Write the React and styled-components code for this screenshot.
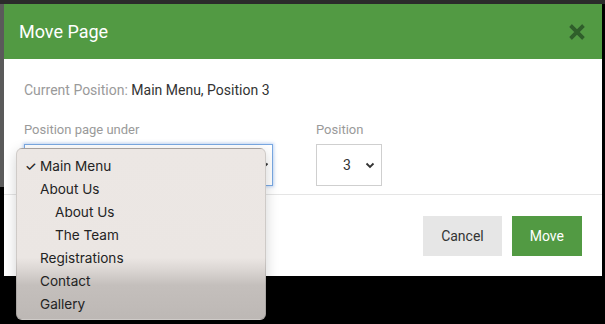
import React from "react";
import styled, { createGlobalStyle } from "styled-components";

const Global = createGlobalStyle`
  html, body { margin: 0; padding: 0; }
  body {
    width: 605px; height: 324px; overflow: hidden;
    background:
      linear-gradient(#2b2b2b, #2b2b2b) 0 0 / 100% 4px no-repeat,
      linear-gradient(#5a5a5a, #5a5a5a) 0 0 / 4px 187px no-repeat,
      #000;
    font-family: Roboto, "Liberation Sans", sans-serif;
  }
`;

const Page = styled.div`
  padding: 4px 3px 0 4px;
  height: 324px;
  box-sizing: border-box;
`;

const Modal = styled.div`
  width: 598px;
  height: 272px;
  background: #fff;
  display: flex;
  flex-direction: column;
`;

const Header = styled.div`
  height: 55px;
  background: #529a43;
  display: flex;
  align-items: center;
  justify-content: space-between;
  padding: 0 16px 0 15px;
  box-sizing: border-box;
`;

const Title = styled.h1`
  margin: 0;
  font-size: 18px;
  font-weight: 400;
  color: #fff;
`;

const Close = styled.button`
  border: 0;
  background: none;
  padding: 0;
  width: 18px;
  height: 18px;
  display: flex;
  cursor: pointer;
`;

const Body = styled.div`
  padding: 23px 20px 8px 20px;
  border-bottom: 1px solid #e5e5e5;
`;

const Current = styled.div`
  font-size: 14px;
  line-height: 16px;
  color: #9a9a9a;
  span { color: #333; }
`;

const Row = styled.div`
  display: flex;
  gap: 43px;
  margin-top: 24px;
`;

const Group = styled.div`
  position: relative;
  display: flex;
  flex-direction: column;
  gap: 7px;
`;

const Label = styled.label`
  font-size: 13px;
  line-height: 15px;
  color: #9a9a9a;
`;

const SelectBox = styled.div`
  box-sizing: border-box;
  width: ${(p) => p.$w}px;
  height: 42px;
  border: 1px solid ${(p) => (p.$focus ? "#79a8e2" : "#cfcfcf")};
  box-shadow: ${(p) => (p.$focus ? "0 0 3px 1px rgba(120,165,230,0.45)" : "none")};
  display: flex;
  align-items: center;
  justify-content: space-between;
  padding: 0 ${(p) => (p.$focus ? 3 : 6)}px 0 26px;
  font-size: 14px;
  color: #333;
  background: #fff;
`;

const Chevron = () => (
  <svg width="10" height="7" viewBox="0 0 10 7">
    <path d="M1.5 1.5 L5 5 L8.5 1.5" fill="none" stroke="#333" strokeWidth="1.8" />
  </svg>
);

const Menu = styled.ul`
  position: absolute;
  left: -8px;
  top: 26px;
  width: 250px;
  height: 172px;
  box-sizing: border-box;
  margin: 0;
  padding: 5px 0 0;
  list-style: none;
  border-radius: 6px;
  border: 1px solid rgba(0, 0, 0, 0.12);
  background: linear-gradient(
    to bottom,
    #ece7e4 0%,
    #ebe6e3 64%,
    #d9d4d1 72%,
    #c4bfbc 80%,
    #bdb8b5 100%
  );
  box-shadow: 0 4px 14px rgba(0, 0, 0, 0.18);
  font-family: Inter, "Liberation Sans", sans-serif;
  font-size: 13.6px;
  color: #232323;
  z-index: 5;
`;

const Item = styled.li`
  height: 23px;
  display: flex;
  align-items: center;
  padding-left: ${(p) => 23 + p.$level * 15}px;
  position: relative;
`;

const Check = styled.span`
  position: absolute;
  left: 8px;
  font-size: 13px;
  font-weight: 500;
`;

const Footer = styled.div`
  flex: 1;
  display: flex;
  justify-content: flex-end;
  align-items: center;
  gap: 10px;
  padding: 0 20px;
`;

const Button = styled.button`
  height: 40px;
  border: 0;
  padding: 0 ${(p) => p.$px}px;
  font-family: Roboto, "Liberation Sans", sans-serif;
  font-size: 14px;
  background: ${(p) => (p.$primary ? "#529a43" : "#e6e6e6")};
  color: ${(p) => (p.$primary ? "#fff" : "#333")};
  cursor: pointer;
`;

const items = [
  { label: "Main Menu", level: 0, checked: true },
  { label: "About Us", level: 0 },
  { label: "About Us", level: 1 },
  { label: "The Team", level: 1 },
  { label: "Registrations", level: 0 },
  { label: "Contact", level: 0 },
  { label: "Gallery", level: 0 },
];

export default function App() {
  return (
    <>
      <Global />
      <Page>
        <Modal>
          <Header>
            <Title>Move Page</Title>
            <Close aria-label="Close">
              <svg width="18" height="18" viewBox="0 0 18 18">
                <path d="M2.5 2.5 L15.5 15.5 M15.5 2.5 L2.5 15.5" stroke="#6fae62" strokeWidth="5" strokeLinecap="butt" opacity="0.5" />
                <path d="M2.5 2.5 L15.5 15.5 M15.5 2.5 L2.5 15.5" stroke="#2f5f2a" strokeWidth="4" strokeLinecap="butt" />
              </svg>
            </Close>
          </Header>
          <Body>
            <Current>
              Current Position: <span>Main Menu, Position 3</span>
            </Current>
            <Row>
              <Group>
                <Label>Position page under</Label>
                <SelectBox $w={249} $focus>
                  <span />
                  <Chevron />
                </SelectBox>
                <Menu>
                  {items.map((it, i) => (
                    <Item key={i} $level={it.level}>
                      {it.checked && <Check>✓</Check>}
                      {it.label}
                    </Item>
                  ))}
                </Menu>
              </Group>
              <Group>
                <Label>Position</Label>
                <SelectBox $w={66}>
                  <span>3</span>
                  <Chevron />
                </SelectBox>
              </Group>
            </Row>
          </Body>
          <Footer>
            <Button $px={18}>Cancel</Button>
            <Button $primary $px={18}>Move</Button>
          </Footer>
        </Modal>
      </Page>
    </>
  );
}
